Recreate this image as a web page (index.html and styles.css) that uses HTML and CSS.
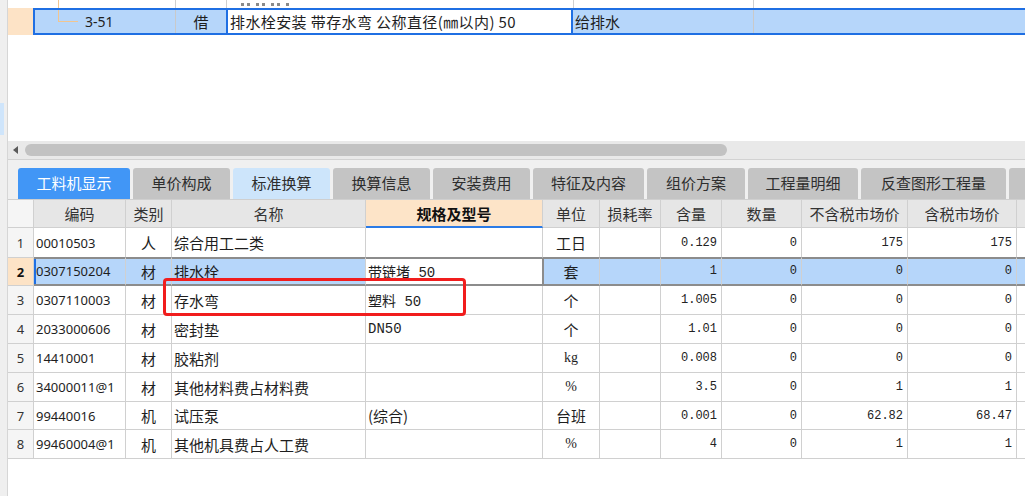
FILE: index.html
```html
<!DOCTYPE html>
<html lang="zh-CN">
<head>
<meta charset="utf-8">
<title>工料机显示</title>
<link rel="stylesheet" href="styles.css">
</head>
<body>
<div class="app">
  <div class="strip"><div class="strip-sel"></div></div>
  <div class="main">
    <div class="upper">
      <div class="urow prev">
        <div class="u-rn"></div>
        <div class="u-code"><span class="tree-v full"></span></div>
        <div class="u-type"></div>
        <div class="u-name"><span class="frag"></span></div>
        <div class="u-prof"></div>
        <div class="u-rest"></div>
      </div>
      <div class="urow sel">
        <div class="u-rn peach"></div>
        <div class="selbox">
          <div class="s-code"><span class="tree-v half"></span><span class="tree-h"></span><span class="code-txt">3-51</span></div>
          <div class="s-type">借</div>
          <div class="s-name">排水栓安装 带存水弯 公称直径(㎜以内) 50</div>
          <div class="s-prof">给排水</div>
          <div class="s-rest"></div>
        </div>
      </div>
    </div>

    <div class="hscroll">
      <span class="arrow"></span>
      <div class="thumb"></div>
    </div>

    <div class="tabsbar">
      <div class="tab active w112">工料机显示</div>
      <div class="tab w97">单价构成</div>
      <div class="tab light w97">标准换算</div>
      <div class="tab w97">换算信息</div>
      <div class="tab w97">安装费用</div>
      <div class="tab w111">特征及内容</div>
      <div class="tab w98">组价方案</div>
      <div class="tab w110">工程量明细</div>
      <div class="tab w145">反查图形工程量</div>
      <div class="tab w40"></div>
    </div>

    <div class="grid">
      <div class="h rn"></div>
      <div class="h">编码</div>
      <div class="h">类别</div>
      <div class="h">名称</div>
      <div class="h spec-h">规格及型号</div>
      <div class="h">单位</div>
      <div class="h">损耗率</div>
      <div class="h">含量</div>
      <div class="h">数量</div>
      <div class="h">不含税市场价</div>
      <div class="h">含税市场价</div>
      <div class="h"></div>

      <div class="c rn">1</div>
      <div class="c code r1">00010503</div>
      <div class="c ctr r1">人</div>
      <div class="c txt r1">综合用工二类</div>
      <div class="c txt r1"></div>
      <div class="c ctr r1">工日</div>
      <div class="c num r1"></div>
      <div class="c num r1">0.129</div>
      <div class="c num r1">0</div>
      <div class="c num r1">175</div>
      <div class="c num r1">175</div>
      <div class="c r1"></div>

      <div class="c rn rn-sel">2</div>
      <div class="c code r2 blue first">0307150204</div>
      <div class="c ctr r2 blue">材</div>
      <div class="c txt r2 blue">排水栓</div>
      <div class="c spec r2 focus">带链堵 50</div>
      <div class="c ctr r2 blue unitsel">套</div>
      <div class="c num r2 blue"></div>
      <div class="c num r2 blue">1</div>
      <div class="c num r2 blue">0</div>
      <div class="c num r2 blue">0</div>
      <div class="c num r2 blue">0</div>
      <div class="c r2 blue"></div>

      <div class="c rn">3</div>
      <div class="c code">0307110003</div>
      <div class="c ctr">材</div>
      <div class="c txt">存水弯</div>
      <div class="c spec">塑料 50</div>
      <div class="c ctr">个</div>
      <div class="c num"></div>
      <div class="c num">1.005</div>
      <div class="c num">0</div>
      <div class="c num">0</div>
      <div class="c num">0</div>
      <div class="c"></div>

      <div class="c rn">4</div>
      <div class="c code">2033000606</div>
      <div class="c ctr">材</div>
      <div class="c txt">密封垫</div>
      <div class="c spec">DN50</div>
      <div class="c ctr">个</div>
      <div class="c num"></div>
      <div class="c num">1.01</div>
      <div class="c num">0</div>
      <div class="c num">0</div>
      <div class="c num">0</div>
      <div class="c"></div>

      <div class="c rn">5</div>
      <div class="c code">14410001</div>
      <div class="c ctr">材</div>
      <div class="c txt">胶粘剂</div>
      <div class="c spec"></div>
      <div class="c ctr unit-serif">kg</div>
      <div class="c num"></div>
      <div class="c num">0.008</div>
      <div class="c num">0</div>
      <div class="c num">0</div>
      <div class="c num">0</div>
      <div class="c"></div>

      <div class="c rn">6</div>
      <div class="c code">34000011@1</div>
      <div class="c ctr">材</div>
      <div class="c txt">其他材料费占材料费</div>
      <div class="c spec"></div>
      <div class="c ctr unit-serif">%</div>
      <div class="c num"></div>
      <div class="c num">3.5</div>
      <div class="c num">0</div>
      <div class="c num">1</div>
      <div class="c num">1</div>
      <div class="c"></div>

      <div class="c rn">7</div>
      <div class="c code">99440016</div>
      <div class="c ctr">机</div>
      <div class="c txt">试压泵</div>
      <div class="c txt">(综合)</div>
      <div class="c ctr">台班</div>
      <div class="c num"></div>
      <div class="c num">0.001</div>
      <div class="c num">0</div>
      <div class="c num">62.82</div>
      <div class="c num">68.47</div>
      <div class="c"></div>

      <div class="c rn">8</div>
      <div class="c code">99460004@1</div>
      <div class="c ctr">机</div>
      <div class="c txt">其他机具费占人工费</div>
      <div class="c spec"></div>
      <div class="c ctr unit-serif">%</div>
      <div class="c num"></div>
      <div class="c num">4</div>
      <div class="c num">0</div>
      <div class="c num">1</div>
      <div class="c num">1</div>
      <div class="c"></div>
    </div>
  </div>
</div>
<div class="annot"></div>
</body>
</html>
```

FILE: styles.css
```css
* { box-sizing: border-box; }

body {
  margin: 0;
  width: 1025px;
  height: 496px;
  overflow: hidden;
  position: relative;
  background: #ffffff;
  font-family: "Noto Sans CJK SC", "Noto Sans", sans-serif;
  color: #1e1e1e;
}

.app {
  display: flex;
  height: 496px;
}

.strip {
  flex: none;
  width: 8px;
  background: #efefef;
  border-right: 1px solid #d6d6d6;
  padding-top: 103px;
}

.strip-sel {
  width: 4px;
  height: 32px;
  background: #cfe5fb;
}

.main {
  flex: 1;
  min-width: 0;
  display: flex;
  flex-direction: column;
  overflow: hidden;
}

/* ---------- upper tree grid ---------- */
.upper {
  flex: none;
  height: 141px;
  overflow: hidden;
}

.urow {
  display: flex;
  height: 28px;
}

.urow.prev {
  margin-top: -20px;
}

.u-rn { flex: none; width: 25px; }
.u-rn.peach { background: #fde3c6; }

.u-code { flex: none; width: 142px; position: relative; }
.u-type { flex: none; width: 51px; border-left: 1px solid #d0d0d0; }
.u-name {
  flex: none;
  width: 347px;
  border-left: 1px solid #d0d0d0;
  padding: 0 0 2px 14px;
  display: flex;
  align-items: flex-end;
}
.u-prof { flex: none; width: 180px; border-left: 1px solid #d0d0d0; }
.u-rest { flex: 1; border-left: 1px solid #d0d0d0; }

.frag {
  width: 48px;
  height: 3px;
  background: repeating-linear-gradient(90deg, #8a8a8a 0 3px, transparent 3px 6px, #8a8a8a 6px 9px, transparent 9px 15px);
}

.tree-v {
  position: absolute;
  width: 1px;
  background: #f2c58f;
}
.tree-v.full { left: 25px; top: 0; bottom: 0; }
.tree-v.half { left: 23px; top: 0; height: 12px; }
.tree-h {
  position: absolute;
  left: 23px;
  top: 11px;
  width: 20px;
  height: 1px;
  background: #f2c58f;
}

.urow.sel { height: 27px; }

.selbox {
  flex: 1;
  display: flex;
  border: 2px solid #1f6fe3;
  border-right: none;
  background: #b6d6fa;
  font-size: 15px;
  line-height: 23px;
}

.s-code {
  flex: none;
  width: 140px;
  position: relative;
  padding-left: 50px;
  font-family: "Noto Sans", sans-serif;
  font-size: 14px;
}
.s-type {
  flex: none;
  width: 51px;
  border-left: 1px solid #c9c9c9;
  text-align: center;
}
.s-name {
  flex: none;
  width: 347px;
  background: #ffffff;
  border-left: 2px solid #1f6fe3;
  border-right: 2px solid #1f6fe3;
  padding-left: 2px;
  white-space: nowrap;
  overflow: hidden;
  letter-spacing: 0.4px;
}
.s-prof { flex: none; width: 180px; padding-left: 2px; }
.s-rest { flex: 1; border-left: 1px solid #c9c9c9; }

/* ---------- horizontal scrollbar ---------- */
.hscroll {
  flex: none;
  height: 19px;
  display: flex;
  align-items: center;
  background: #e9e9e9;
  border-bottom: 1px solid #d2d2d2;
  padding-left: 5px;
}

.arrow {
  width: 0;
  height: 0;
  border-top: 4px solid transparent;
  border-bottom: 4px solid transparent;
  border-right: 5px solid #5a5a5a;
  margin-right: 7px;
}

.thumb {
  width: 702px;
  height: 12px;
  border-radius: 6px;
  background: #c2c2c2;
}

/* ---------- tabs ---------- */
.tabsbar {
  flex: none;
  height: 39px;
  background: #f0f0f0;
  display: flex;
  align-items: flex-end;
  gap: 3px;
  padding-left: 10px;
  white-space: nowrap;
}

.tab {
  flex: none;
  height: 31px;
  background: #c4c4c4;
  border-radius: 3px 3px 0 0;
  font-size: 15px;
  line-height: 30px;
  text-align: center;
  color: #2e2e2e;
}
.tab.active { background: #4196f6; color: #ffffff; }
.tab.light { background: #cde5fb; }

.w112 { width: 112px; }
.w97 { width: 97px; }
.w111 { width: 111px; }
.w98 { width: 98px; }
.w110 { width: 110px; }
.w145 { width: 145px; }
.w40 { width: 40px; }

/* ---------- data grid ---------- */
.grid {
  flex: none;
  display: grid;
  grid-template-columns: 26px 92px 46px 194px 177px 57px 61px 61px 80px 106px 109px 40px;
  grid-template-rows: 28px 30px 28px 29px 29px 29px 29px 28px 29px;
  border-top: 1px solid #cfcfcf;
  width: 1049px;
}

.h, .c {
  border-right: 1px solid #d0d0d0;
  border-bottom: 1px solid #d0d0d0;
  display: flex;
  align-items: center;
  white-space: nowrap;
  overflow: hidden;
}

.h {
  background: #e6e6e6;
  justify-content: center;
  font-size: 15px;
  color: #333333;
}

.h.spec-h {
  background: #fde4c8;
  font-weight: bold;
  color: #111111;
  border-bottom: 2px solid #2b7be6;
}

.c {
  font-size: 15px;
  background: #ffffff;
}

.rn {
  background: #f5f5f5;
  justify-content: center;
  font-family: "Noto Sans", sans-serif;
  font-size: 13px;
  color: #333333;
}

.rn-sel {
  background: #fde3c6;
  font-weight: bold;
  color: #111111;
}

.code {
  font-family: "Noto Sans", sans-serif;
  font-size: 13px;
  padding-left: 2px;
}

.ctr { justify-content: center; }

.txt { padding-left: 2px; }

.spec {
  padding-left: 2px;
  font-family: "Liberation Mono", "Noto Sans CJK SC", monospace;
  font-size: 14px;
}

.num {
  justify-content: flex-end;
  padding-right: 4px;
  font-family: "Liberation Mono", monospace;
  font-size: 12px;
  color: #222222;
}

.unit-serif {
  font-family: "Liberation Serif", serif;
  font-size: 14px;
}

.r1 { border-bottom-color: #8c8c8c; }

.r2 {
  border-bottom: 2px solid #8c8c8c;
  box-shadow: inset 0 1px 0 #8c8c8c;
}

.blue { background: #b6d6fa; }

.r2.first { box-shadow: inset 0 1px 0 #8c8c8c, inset 2px 0 0 #1f6fe3; }

.r2.focus { background: #ffffff; border-right-color: #8c8c8c; }

.r2.unitsel { box-shadow: inset 0 1px 0 #8c8c8c, inset 1px 0 0 #8c8c8c; }

/* ---------- annotation overlay ---------- */
.annot {
  position: absolute;
  left: 163px;
  top: 278px;
  width: 303px;
  height: 38px;
  border: 3px solid #f11d1d;
  border-radius: 4px;
  pointer-events: none;
}
```
